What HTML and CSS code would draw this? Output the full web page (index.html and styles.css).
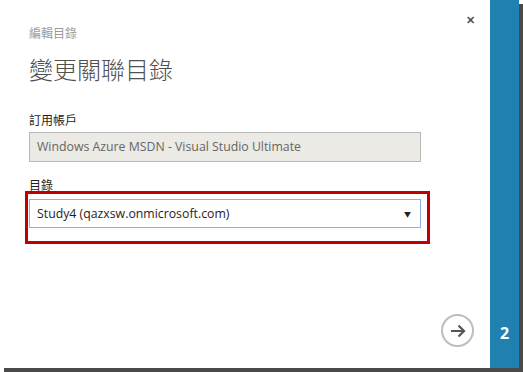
FILE: index.html
```html
<!DOCTYPE html>
<html lang="zh-Hant">
<head>
    <meta charset="UTF-8">
    <title>變更關聯目錄</title>
    <link rel="stylesheet" href="styles.css">
</head>
<body>
    <div class="dialog">
        <div class="panel">
            <div class="header">
                <div class="subtitle">編輯目錄</div>
                <span class="close">&#x2715;</span>
            </div>
            <h1 class="title">變更關聯目錄</h1>

            <div class="field field-account">
                <label class="label">訂用帳戶</label>
                <div class="textbox">Windows Azure MSDN - Visual Studio Ultimate</div>
            </div>

            <div class="field field-directory">
                <label class="label">目錄</label>
                <div class="select-wrap">
                    <div class="select">
                        <span>Study4 (qazxsw.onmicrosoft.com)</span>
                        <span class="caret">&#9660;</span>
                    </div>
                    <!-- red annotation box -->
                    <div class="highlight"></div>
                </div>
            </div>

            <div class="footer">
                <div class="next">
                    <svg width="16" height="14" viewBox="0 0 16 14">
                        <path d="M1 7 H14 M8.5 1.5 L14 7 L8.5 12.5" fill="none" stroke="#555" stroke-width="2.2"/>
                    </svg>
                </div>
            </div>
        </div>
        <div class="steps">
            <span class="step">2</span>
        </div>
    </div>
</body>
</html>
```

FILE: styles.css
```css
body, html {
    margin: 0;
    padding: 0;
    background: #fff;
}
body {
    padding-bottom: 4px; /* room for the bottom shadow */
}
.dialog {
    display: flex;
    width: 519px;
    height: 368px;
    box-shadow: 4px 4px 0 #4a4a4a;
    font-family: "Open Sans", "Noto Sans CJK TC", sans-serif;
}
.panel {
    flex: 1;
    display: flex;
    flex-direction: column;
    background: #fff;
    padding: 0 0 0 29px;
}
.header {
    display: flex;
    justify-content: space-between;
    align-items: flex-start;
    padding-top: 14px;
}
.subtitle {
    margin-top: 11px;
    font-family: "Noto Sans CJK TC", sans-serif;
    font-size: 12px;
    line-height: 16px;
    color: #9a9a9a;
}
.close {
    margin-right: 15px;
    font-size: 11px;
    font-weight: bold;
    color: #555;
    line-height: 12px;
}
.title {
    margin: 10px 0 0 0;
    font-family: "Noto Sans CJK TC", sans-serif;
    font-weight: 300;
    font-size: 24px;
    line-height: 36px;
    color: #505050;
}
.field {
    width: 392px;
}
.label {
    display: block;
    font-family: "Noto Sans CJK TC", sans-serif;
    font-size: 12px;
    line-height: 18px;
    color: #222;
}
.field-account .label {
    margin-top: 24px;
    margin-bottom: 3px;
}
.textbox {
    box-sizing: border-box;
    height: 30px;
    padding: 0 7px;
    border: 1px solid #b8b8b8;
    background: #ebeae4;
    color: #666;
    font-size: 12.3px;
    line-height: 28px;
    white-space: nowrap;
}
.field-directory .label {
    margin-top: 14px;
    margin-bottom: 5px;
}
.select-wrap {
    position: relative;
}
.select {
    box-sizing: border-box;
    height: 29px;
    display: flex;
    justify-content: space-between;
    align-items: center;
    padding: 0 9px 0 7px;
    border: 1px solid #8ab2e8;
    background: #fff;
    color: #1e1e1e;
    font-size: 12.3px;
}
.caret {
    font-size: 7px;
    color: #222;
}
.highlight {
    position: absolute;
    top: -8px;
    left: -4px;
    right: -9px;
    bottom: -16px;
    border: 3px solid #c00000;
}
.footer {
    margin-top: auto;
    display: flex;
    justify-content: flex-end;
    padding: 0 16px 21px 0;
}
.next {
    box-sizing: border-box;
    width: 33px;
    height: 33px;
    border: 2px solid #bdbdbd;
    border-radius: 50%;
    display: flex;
    align-items: center;
    justify-content: center;
}
.steps {
    width: 29px;
    background: #2080b0;
    display: flex;
    flex-direction: column;
    justify-content: flex-end;
    align-items: center;
    padding-bottom: 26px;
    box-sizing: border-box;
}
.step {
    color: #fff;
    font-weight: bold;
    font-size: 16px;
    line-height: 18px;
}
```
